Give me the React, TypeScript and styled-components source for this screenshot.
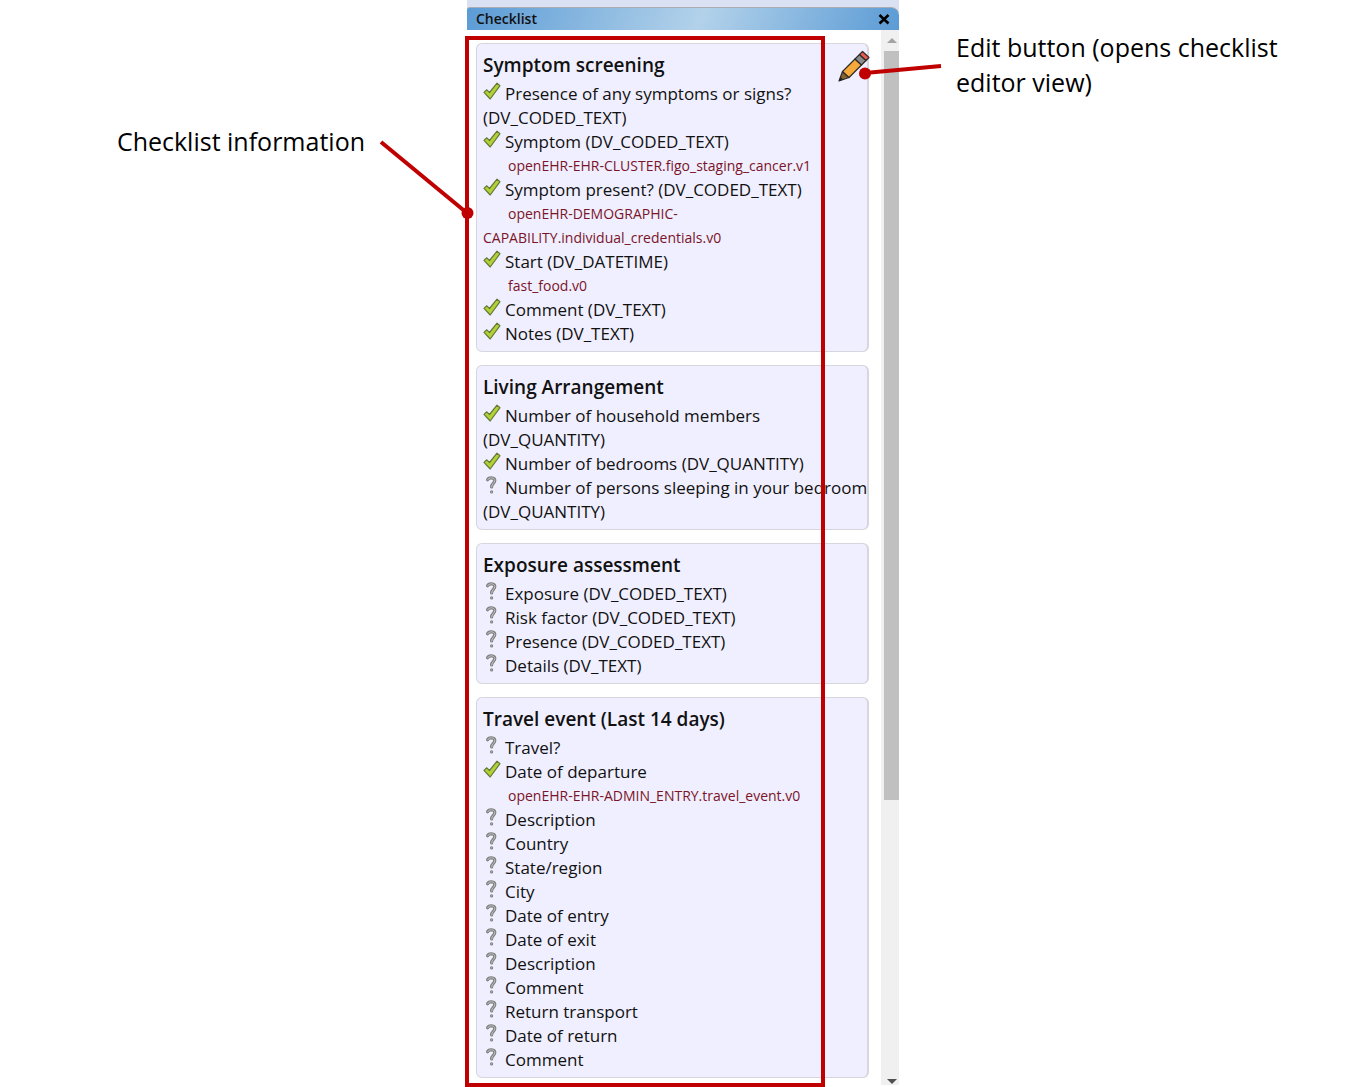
import React from "react";
import styled, { createGlobalStyle, css } from "styled-components";

const RED = "#c00000";

const GlobalStyle = createGlobalStyle`
  *, *::before, *::after { box-sizing: border-box; }
  body {
    margin: 0;
    background: #fff;
    color: #111;
    font-family: "Open Sans", "Noto Sans", sans-serif;
  }
`;

const Page = styled.div`
  display: grid;
  grid-template-columns: 1fr 432px 1fr;
  min-height: 100vh;
  padding-right: 2px;
`;

const Note = styled.p<{ $side: "left" | "right" }>`
  margin: 0;
  font-size: 25px;
  line-height: 35px;
  color: #000;
  ${({ $side }) =>
    $side === "left"
      ? css`padding: 124px 102px 0 0; text-align: right;`
      : css`padding: 30px 64px 0 57px;`}
`;

const Panel = styled.section`
  position: relative;
  display: flex;
  flex-direction: column;
  padding-top: 7px;
  background: linear-gradient(#d9e1f2, #d9e1f2) top / 100% 12px no-repeat;
`;

const TitleBar = styled.header`
  display: flex;
  align-items: center;
  justify-content: space-between;
  height: 23px;
  padding: 0 8px 0 9px;
  border-top: 1px solid #a9adb3;
  border-radius: 3px 8px 0 0;
  background: linear-gradient(110deg, #5b9bd5 0%, #b3d2ea 54%, #5b9bd5 100%);
`;

const PanelTitle = styled.h1`
  margin: 0;
  font-size: 14px;
  font-weight: 600;
  line-height: 20px;
`;

const IconButton = styled.button`
  display: block;
  padding: 0;
  border: 0;
  background: none;
  cursor: pointer;
  svg { display: block; }
`;

const EditButton = styled(IconButton)`
  position: absolute;
  top: 50px;
  right: 28px;
`;

const PanelBody = styled.div`
  display: flex;
  flex: 1;
`;

const List = styled.div`
  display: flex;
  flex: 1;
  flex-direction: column;
  gap: 13px;
  padding: 13px 12px 8px 9px;
`;

const Card = styled.article`
  padding: 5px 0 5px 6px;
  border: 1px solid #d6d6dc;
  border-right-width: 2px;
  border-radius: 6px;
  background: #f0efff;
`;

const CardTitle = styled.h2`
  margin: 0 0 1px;
  font-size: 19px;
  font-weight: 600;
  line-height: 32px;
`;

const Items = styled.ul`
  margin: 0;
  padding: 0;
  list-style: none;
`;

const Item = styled.li`
  font-size: 17px;
  line-height: 24px;
`;

const Label = styled.span`
  white-space: nowrap;
  > svg {
    display: inline-block;
    margin-right: 4px;
    vertical-align: baseline;
  }
`;

const Archetype = styled.div`
  font-size: 14px;
  line-height: 24px;
  text-indent: 25px;
  color: #7a1428;
`;

const ScrollTrack = styled.div`
  display: flex;
  flex-direction: column;
  width: 19px;
  margin-bottom: 2px;
  padding-left: 3px;
  background: #f0f0f0;
`;

const ScrollArrow = styled.div<{ $down?: boolean }>`
  display: flex;
  align-items: center;
  justify-content: center;
  height: ${({ $down }) => ($down ? "8px" : "21px")};
  margin-top: ${({ $down }) => ($down ? "auto" : "0")};
`;

const ScrollThumb = styled.div`
  flex: 0 0 71%;
  background: #c0c0c0;
`;

const Highlight = styled.div`
  position: absolute;
  top: 36px;
  bottom: 0;
  left: -2px;
  width: 360px;
  border: 4px solid ${RED};
  pointer-events: none;
`;

const Connector = styled.svg<{ $left: number; $top: number }>`
  position: absolute;
  left: ${({ $left }) => $left}px;
  top: ${({ $top }) => $top}px;
  pointer-events: none;
`;

const CheckIcon = () => (
  <svg width="18" height="18" viewBox="0 0 18 18" role="img" aria-label="Complete">
    <path d="M1 10.4 3.800 7.800l2.700 2.700L14 1.200 17 3.600 7.200 17z" fill="#b0d235" stroke="#66783a" strokeWidth="1.200" strokeLinejoin="round" />
  </svg>
);

const QuestionIcon = () => (
  <svg width="18" height="18" viewBox="0 0 18 18" role="img" aria-label="Unanswered">
    <g fill="none" strokeLinecap="round">
      <path d="M4.600 3.800C5.600 1 11.800 1 11.800 4.600c0 2.800-3.200 3-3.200 6.400M8.600 15.800v.2" stroke="#808080" strokeWidth="3.200" />
      <path d="M4.600 3.800C5.600 1 11.800 1 11.800 4.600c0 2.800-3.200 3-3.200 6.400M8.600 15.800v.2" stroke="#c4c4c8" strokeWidth="1" />
    </g>
  </svg>
);

const PencilIcon = () => (
  <svg width="34" height="33" viewBox="0 0 34 33" aria-hidden="true">
    <g stroke="#2c2a2a" strokeWidth="1.2" strokeLinejoin="round">
      <path d="M2 31 5.500 21.500 12 27.500z" fill="#8a6430" />
      <path d="M5.500 21.500 18 9 24.500 15 12 27.500z" fill="#f5a93b" />
      <path d="M18 9 22.500 4.500 29 10.500 24.500 15z" fill="#8b8b8b" />
      <path d="M22.500 4.500 25.500 1.500 32 7.500 29 10.500z" fill="#ea5a50" />
    </g>
    <path d="M2 31 3.400 27l3 2.600z" fill="#222" />
  </svg>
);

type Entry = { text: string; type?: string; done?: boolean; archetype?: string };

const sections: { title: string; items: Entry[] }[] = [
  {
    title: "Symptom screening",
    items: [
      { text: "Presence of any symptoms or signs?", type: "DV_CODED_TEXT", done: true },
      { text: "Symptom", type: "DV_CODED_TEXT", done: true, archetype: "openEHR-EHR-CLUSTER.figo_staging_cancer.v1" },
      { text: "Symptom present?", type: "DV_CODED_TEXT", done: true, archetype: "openEHR-DEMOGRAPHIC-CAPABILITY.individual_credentials.v0" },
      { text: "Start", type: "DV_DATETIME", done: true, archetype: "fast_food.v0" },
      { text: "Comment", type: "DV_TEXT", done: true },
      { text: "Notes", type: "DV_TEXT", done: true },
    ],
  },
  {
    title: "Living Arrangement",
    items: [
      { text: "Number of household members", type: "DV_QUANTITY", done: true },
      { text: "Number of bedrooms", type: "DV_QUANTITY", done: true },
      { text: "Number of persons sleeping in your bedroom", type: "DV_QUANTITY" },
    ],
  },
  {
    title: "Exposure assessment",
    items: [
      { text: "Exposure", type: "DV_CODED_TEXT" },
      { text: "Risk factor", type: "DV_CODED_TEXT" },
      { text: "Presence", type: "DV_CODED_TEXT" },
      { text: "Details", type: "DV_TEXT" },
    ],
  },
  {
    title: "Travel event (Last 14 days)",
    items: [
      { text: "Travel?" },
      { text: "Date of departure", done: true, archetype: "openEHR-EHR-ADMIN_ENTRY.travel_event.v0" },
      { text: "Description" },
      { text: "Country" },
      { text: "State/region" },
      { text: "City" },
      { text: "Date of entry" },
      { text: "Date of exit" },
      { text: "Description" },
      { text: "Comment" },
      { text: "Return transport" },
      { text: "Date of return" },
      { text: "Comment" },
    ],
  },
];

export default function App() {
  return (
    <>
      <GlobalStyle />
      <Page>
        <Note $side="left">Checklist information</Note>
        <Panel>
          <TitleBar>
            <PanelTitle>Checklist</PanelTitle>
            <IconButton type="button" aria-label="Close">
              <svg width="14" height="14" viewBox="0 0 14 14" aria-hidden="true">
                <path d="M2.500 3 11.500 11.500M11.500 3 2.500 11.500" stroke="#000" strokeWidth="2.600" />
              </svg>
            </IconButton>
          </TitleBar>
          <PanelBody>
            <List>
              {sections.map((section) => (
                <Card key={section.title}>
                  <CardTitle>{section.title}</CardTitle>
                  <Items>
                    {section.items.map((item, index) => (
                      <Item key={index}>
                        <Label>
                          {item.done ? <CheckIcon /> : <QuestionIcon />}
                          {item.text}
                        </Label>
                        {item.type && ` (${item.type})`}
                        {item.archetype && <Archetype>{item.archetype}</Archetype>}
                      </Item>
                    ))}
                  </Items>
                </Card>
              ))}
            </List>
            <ScrollTrack aria-hidden="true">
              <ScrollArrow>
                <svg width="10" height="5" viewBox="0 0 10 5"><path d="M0 5 5 0l5 5z" fill="#a3a3a3" /></svg>
              </ScrollArrow>
              <ScrollThumb />
              <ScrollArrow $down>
                <svg width="10" height="5" viewBox="0 0 10 5"><path d="M0 0h10L5 5z" fill="#505050" /></svg>
              </ScrollArrow>
            </ScrollTrack>
          </PanelBody>
          <EditButton type="button" aria-label="Edit checklist">
            <PencilIcon />
          </EditButton>
          <Highlight />
          <Connector $left={-90} $top={138} width="100" height="84" viewBox="0 0 100 84" aria-hidden="true">
            <path d="M4 4 90 75" stroke={RED} strokeWidth="4" />
            <circle cx="90.500" cy="75" r="6" fill={RED} />
          </Connector>
          <Connector $left={390} $top={60} width="86" height="22" viewBox="0 0 86 22" aria-hidden="true">
            <path d="M8 13 84 6" stroke={RED} strokeWidth="4" />
            <circle cx="8" cy="13.500" r="6" fill={RED} />
          </Connector>
        </Panel>
        <Note $side="right">Edit button (opens checklist editor view)</Note>
      </Page>
    </>
  );
}
